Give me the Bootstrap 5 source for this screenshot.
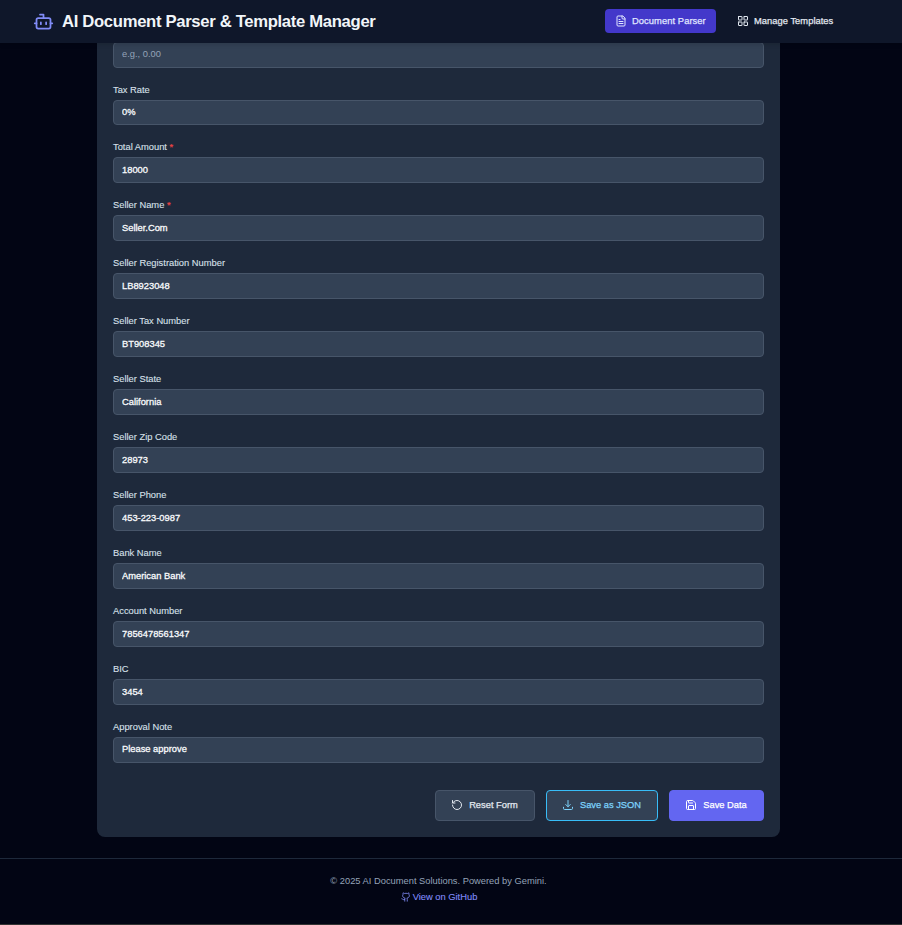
<!DOCTYPE html>
<html lang="en" data-bs-theme="dark">
<head>
<meta charset="utf-8">
<meta name="viewport" content="width=device-width, initial-scale=1">
<title>AI Document Parser &amp; Template Manager</title>
<link href="https://cdn.jsdelivr.net/npm/bootstrap@5.3.0/dist/css/bootstrap.min.css" rel="stylesheet">
<style>
  body { background: #020514; font-family: "Liberation Sans", Arial, sans-serif; font-size: 9.33px; line-height: 13.33px; color: #e2e8f0; height: 925px; overflow: hidden; }
  svg { fill: none; stroke: currentColor; stroke-width: 2; stroke-linecap: round; stroke-linejoin: round; flex: none; }
  .topbar { height: 43px; padding: 0 34px 1px 33px; width: 877px; }
  .topbar-bg { background: #0f172a; height: 43px; box-shadow: 0 2px 4px rgba(0,0,0,.12); }
  .brand { font-size: 16.67px; line-height: 22px; font-weight: 700; color: #f1f5f9; gap: 8px; margin: 0; padding-top: 1px; letter-spacing: -.325px; }
  .brand svg { color: #818cf8; }
  .topbar nav { gap: 11px; }
  .tab { height: 24px; border-radius: 4px; padding: 0 10px; gap: 5px; font-size: 9.33px; letter-spacing: .08px; -webkit-text-stroke: .25px currentColor; color: #e2e8f0; text-decoration: none; }
  .tab.current { background: #4338ca; color: #e0e7ff; width: 111px; }
  .tab.other { width: 116px; letter-spacing: .04px; }
  .tab span { padding-top: 1px; }
  .content-col { width: 877px; }
  .panel { width: 683px; height: 794px; background: #1e293b; border-radius: 0 0 8px 8px; padding: 0 16px 16px; }
  .field { height: 58px; }
  .field.short { height: 57px; }
  .field label { display: block; height: 16px; line-height: 13px; color: #d8e0ea; -webkit-text-stroke: .1px currentColor; }
  .field label span { color: #ef4444; -webkit-text-stroke: .2px currentColor; }
  .field .form-control { height: 26px; min-height: 0; padding: 0 8px; font-size: 9.33px; line-height: 24px; border: 1px solid #475569; border-radius: 4px; background: #334155; color: #f8fafc; -webkit-text-stroke: .3px currentColor; }
  .field.short .form-control { height: 25px; padding-bottom: 1px; line-height: 22px; }
  .field .form-control::placeholder { color: #94a3b8; -webkit-text-stroke: 0; opacity: 1; }
  .field.cut { height: 42px; margin-top: -1px; }
  .field.cut .form-control, .field.note .form-control { padding-bottom: 2px; }
  .actions { gap: 11px; }
  .action { height: 31px; border-radius: 4px; padding: 0; gap: 6px; font-size: 9.33px; line-height: 13px; border: 1px solid #475569; background: #334155; color: #e2e8f0; -webkit-text-stroke: .25px currentColor; }
  .action svg { margin-bottom: 1px; }
  .action.reset { width: 100px; padding-right: 1px; }
  .action.json { width: 112px; padding-right: 1px; border-color: #38bdf8; color: #7dd3fc; }
  .action.save { width: 95px; padding-right: 1px; border-color: #6366f1; background: #6366f1; color: #fff; }
  .foot { height: 67px; margin-top: 21px; border-top: 1px solid #1e293b; border-bottom: 1px solid #333; padding-top: 14px; color: #94a3b8; line-height: 16px; }
  .foot a { color: #818cf8; text-decoration: none; gap: 2px; padding-left: 1px; -webkit-text-stroke: .1px currentColor; }
</style>
<script src="https://cdn.jsdelivr.net/npm/bootstrap@5.3.0/dist/js/bootstrap.bundle.min.js"></script>
</head>
<body>
<header class="topbar-bg position-relative z-1">
  <div class="topbar d-flex align-items-center justify-content-between">
    <h1 class="brand d-flex align-items-center">
      <svg width="21" height="21" viewBox="0 0 24 24"><path d="M12 8V4H8"/><rect x="4" y="8" width="16" height="12" rx="2"/><path d="M2 14h2M20 14h2M15 13v2M9 13v2"/></svg>
      <span>AI Document Parser &amp; Template Manager</span>
    </h1>
    <nav class="d-flex align-items-center">
      <a class="tab current d-flex align-items-center text-nowrap" href="#"><svg width="12" height="12" viewBox="0 0 24 24"><path d="M15 2H6a2 2 0 0 0-2 2v16a2 2 0 0 0 2 2h12a2 2 0 0 0 2-2V7Z"/><path d="M14 2v4a2 2 0 0 0 2 2h4M10 9H8M16 13H8M16 17H8"/></svg><span>Document Parser</span></a>
      <a class="tab other d-flex align-items-center text-nowrap" href="#"><svg width="12" height="12" viewBox="0 0 24 24"><rect x="3" y="3" width="7" height="7" rx=".5"/><rect x="14" y="3" width="7" height="7" rx=".5"/><rect x="14" y="14" width="7" height="7" rx=".5"/><rect x="3" y="14" width="7" height="7" rx=".5"/></svg><span>Manage Templates</span></a>
    </nav>
  </div>
</header>
<main class="content-col">
  <form class="panel mx-auto d-flex flex-column">
    <div class="field cut"><input class="form-control" placeholder="e.g., 0.00" aria-label="Tax Amount"></div>
    <div class="field short"><label for="f1">Tax Rate</label><input class="form-control" id="f1" value="0%"></div>
    <div class="field"><label for="f2">Total Amount <span>*</span></label><input class="form-control" id="f2" value="18000"></div>
    <div class="field"><label for="f3">Seller Name <span>*</span></label><input class="form-control" id="f3" value="Seller.Com"></div>
    <div class="field"><label for="f4">Seller Registration Number</label><input class="form-control" id="f4" value="LB8923048"></div>
    <div class="field"><label for="f5">Seller Tax Number</label><input class="form-control" id="f5" value="BT908345"></div>
    <div class="field"><label for="f6">Seller State</label><input class="form-control" id="f6" value="California"></div>
    <div class="field"><label for="f7">Seller Zip Code</label><input class="form-control" id="f7" value="28973"></div>
    <div class="field"><label for="f8">Seller Phone</label><input class="form-control" id="f8" value="453-223-0987"></div>
    <div class="field"><label for="f9">Bank Name</label><input class="form-control" id="f9" value="American Bank"></div>
    <div class="field"><label for="f10">Account Number</label><input class="form-control" id="f10" value="7856478561347"></div>
    <div class="field"><label for="f11">BIC</label><input class="form-control" id="f11" value="3454"></div>
    <div class="field note"><label for="f12">Approval Note</label><input class="form-control" id="f12" value="Please approve"></div>
    <div class="actions d-flex justify-content-end mt-auto">
      <button type="button" class="btn action reset d-flex align-items-center justify-content-center"><svg width="12" height="12" viewBox="0 0 24 24"><path d="M3 12a9 9 0 1 0 9-9 9.75 9.75 0 0 0-6.74 2.74L3 8"/><path d="M3 3v5h5"/></svg>Reset Form</button>
      <button type="button" class="btn action json d-flex align-items-center justify-content-center"><svg width="12" height="12" viewBox="0 0 24 24"><path d="M3 16.5v2.25A2.25 2.25 0 0 0 5.25 21h13.5A2.25 2.25 0 0 0 21 18.75V16.5M16.5 11 12 15.5 7.5 11M12 15.5V3"/></svg>Save as JSON</button>
      <button type="button" class="btn action save d-flex align-items-center justify-content-center"><svg width="12" height="12" viewBox="0 0 24 24"><path d="M15.2 3a2 2 0 0 1 1.4.6l3.8 3.8a2 2 0 0 1 .6 1.4V19a2 2 0 0 1-2 2H5a2 2 0 0 1-2-2V5a2 2 0 0 1 2-2z"/><path d="M17 21v-7a1 1 0 0 0-1-1H8a1 1 0 0 0-1 1v7M7 3v4a1 1 0 0 0 1 1h7"/></svg>Save Data</button>
    </div>
  </form>
</main>
<footer class="foot">
  <div class="content-col text-center">
    <div>© 2025 AI Document Solutions. Powered by Gemini.</div>
    <a class="d-flex align-items-center justify-content-center" href="#"><svg width="10" height="10" viewBox="0 0 24 24"><path d="M15 22v-4a4.8 4.8 0 0 0-1-3.5c3 0 6-2 6-5.5.08-1.25-.27-2.48-1-3.5.28-1.15.28-2.35 0-3.5 0 0-1 0-3 1.5-2.64-.5-5.36-.5-8 0C6 2 5 2 5 2c-.3 1.15-.3 2.35 0 3.5A5.403 5.403 0 0 0 4 9c0 3.5 3 5.5 6 5.5-.39.49-.68 1.05-.85 1.65-.17.6-.22 1.23-.15 1.85v4"/><path d="M9 18c-4.51 2-5-2-7-2"/></svg>View on GitHub</a>
  </div>
</footer>
</body>
</html>
